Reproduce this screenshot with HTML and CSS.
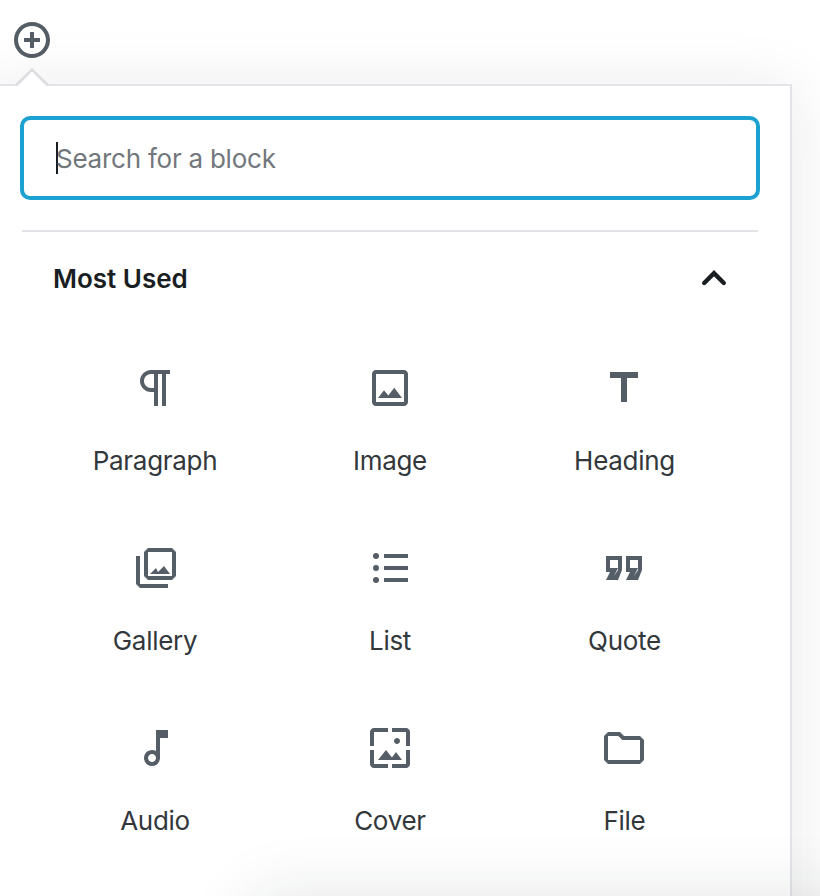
FILE: index.html
```html
<!DOCTYPE html>
<html lang="en">
<head>
<meta charset="utf-8">
<title>Block inserter</title>
<link rel="stylesheet" href="styles.css">
</head>
<body>
<div class="editor">
  <header class="toolbar">
    <svg class="add-icon" viewBox="0 0 20 20"><path d="M10 1c-5 0-9 4-9 9s4 9 9 9 9-4 9-9-4-9-9-9zm0 16c-3.900 0-7-3.100-7-7s3.100-7 7-7 7 3.100 7 7-3.100 7-7 7zm1-11H9v3H6v2h3v3h2v-3h3V9h-3V6z"/></svg>
  </header>
  <main class="popover">
    <svg class="arrow" viewBox="0 0 36 20"><path class="arrow-fill" d="M2 18L18 2l16 16v2H2z"/><path class="arrow-line" d="M2 17.500L18 1.800 34 17.500"/></svg>
    <div class="search"><span class="caret"></span><span class="placeholder">Search for a block</span></div>
    <section class="results">
      <h2 class="panel-title"><span>Most Used</span>
        <svg class="chevron" viewBox="0 0 24 24"><path d="M7.100 14L12 9.100l4.900 4.900"/></svg>
      </h2>
      <ul class="blocks">
        <li class="block"><svg class="icon" viewBox="0 0 24 24"><path d="M11 5v7H9.500C7.600 12 6 10.400 6 8.500S7.600 5 9.500 5H11m8-2H9.500C6.500 3 4 5.500 4 8.500S6.500 14 9.500 14H11v7h2V5h2v16h2V5h2V3z"/></svg><span class="label">Paragraph</span></li>
        <li class="block"><svg class="icon" viewBox="0 0 24 24"><path d="M19 5v14H5V5h14m0-2H5c-1.100 0-2 .9-2 2v14c0 1.100.9 2 2 2h14c1.100 0 2-.9 2-2V5c0-1.100-.9-2-2-2z"/><path d="M14.140 11.860l-3 3.870L9 13.140 6 17h12l-3.860-5.140z"/></svg><span class="label">Image</span></li>
        <li class="block"><svg class="icon" viewBox="0 0 24 24"><path d="M5 4v3h5.500v12h3V7H19V4z"/></svg><span class="label">Heading</span></li>
        <li class="block"><svg class="icon" viewBox="0 0 24 24"><path d="M20 4v12H8V4h12m0-2H8L6 4v12l2 2h12l2-2V4l-2-2z"/><path d="M12 12l1 2 3-3 3 4H9z"/><path d="M2 6v14l2 2h14v-2H4V6H2z"/></svg><span class="label">Gallery</span></li>
        <li class="block"><svg class="icon" viewBox="0 0 24 24"><path d="M9 19h12v-2H9v2zm0-6h12v-2H9v2zm0-8v2h12V5H9z"/><circle cx="5" cy="6" r="1.500"/><circle cx="5" cy="12" r="1.500"/><circle cx="5" cy="18" r="1.500"/></svg><span class="label">List</span></li>
        <li class="block"><svg class="icon" viewBox="0 0 24 24"><path d="M19 18h-6l2-4h-2V6h8v7l-2 5zm-2-2l2-3V8h-4v4h4l-2 4zm-8 2H3l2-4H3V6h8v7l-2 5zm-2-2l2-3V8H5v4h4l-2 4z"/></svg><span class="label">Quote</span></li>
        <li class="block"><svg class="icon" viewBox="0 0 24 24"><path d="M12 3l.01 10.550c-.59-.34-1.270-.55-2-.55C7.790 13 6 14.790 6 17s1.790 4 4.010 4S14 19.210 14 17V7h4V3h-6zm-1.990 16c-1.100 0-2-.9-2-2s.9-2 2-2 2 .9 2 2-.9 2-2 2z"/></svg><span class="label">Audio</span></li>
        <li class="block"><svg class="icon" viewBox="0 0 24 24"><path d="M4 4h7V2H4c-1.100 0-2 .9-2 2v7h2V4zm6 9l-4 5h12l-3-4-2.030 2.710L10 13zm7-4.500c0-.83-.67-1.500-1.500-1.500S14 7.670 14 8.500s.67 1.500 1.500 1.500S17 9.330 17 8.500zM20 2h-7v2h7v7h2V4c0-1.100-.9-2-2-2zm0 18h-7v2h7c1.100 0 2-.9 2-2v-7h-2v7zM4 13H2v7c0 1.100.9 2 2 2h7v-2H4v-7z"/></svg><span class="label">Cover</span></li>
        <li class="block"><svg class="icon" viewBox="0 0 24 24"><path d="M9.170 6l2 2H20v10H4V6h5.170M10 4H4L2 6v12l2 2h16l2-2V8l-2-2h-8l-2-2z"/></svg><span class="label">File</span></li>
      </ul>
    </section>
  </main>
</div>
</body>
</html>
```
FILE: styles.css
```css
* {
  box-sizing: border-box;
}

body {
  margin: 0;
  background: #fff;
  color: #32373c;
  font-family: Inter, "Liberation Sans", sans-serif;
  font-size: 26px;
  line-height: 32px;
}

.editor {
  position: relative;
  height: 896px;
  overflow: hidden;
}

/* Shadow cast by the preview flyout just below the fold */
.editor::after {
  content: "";
  position: absolute;
  top: 898px;
  left: 254px;
  width: 900px;
  height: 300px;
  box-shadow: 0 0 64px rgba(25, 30, 35, 0.12);
}

.toolbar {
  height: 84px;
  padding: 20px 12px 0;
}

.add-icon {
  display: block;
  width: 40px;
  height: 40px;
  fill: #555d66;
}

.popover {
  position: relative;
  width: 804px;
  height: 1000px;
  margin-left: -12px;
  padding: 30px 30px 0;
  border: 2px solid #e2e4e7;
  background: #fff;
  box-shadow: 0 6px 60px rgba(25, 30, 35, 0.1);
}

.arrow {
  position: absolute;
  top: -18px;
  left: 24px;
  width: 36px;
  height: 20px;
}

.arrow-fill {
  fill: #fff;
}

.arrow-line {
  fill: none;
  stroke: #dcdee1;
  stroke-width: 2.8;
}

.search {
  display: flex;
  align-items: center;
  height: 84px;
  padding-left: 32px;
  border: 4px solid #1ca2d1;
  border-radius: 10px;
}

.caret {
  width: 2px;
  height: 32px;
  margin-right: -2px;
  background: #191e23;
}

.placeholder {
  padding-top: 2px;
  color: #72777c;
  letter-spacing: -0.24px;
}

.results {
  margin: 30px 2px 0;
  border-top: 2px solid #e2e4e7;
}

.panel-title {
  display: flex;
  align-items: center;
  justify-content: space-between;
  height: 94px;
  margin: 0;
  padding: 0 20px 0 31px;
  color: #191e23;
  font-size: 26px;
  font-weight: 600;
}

.chevron {
  width: 48px;
  height: 48px;
  fill: none;
  stroke: #191e23;
  stroke-width: 2.200;
  stroke-linecap: round;
}

.blocks {
  display: grid;
  grid-template-columns: repeat(3, 234px);
  grid-auto-rows: 180px;
  margin: 0;
  padding: 0 17px;
  list-style: none;
}

.block {
  display: flex;
  flex-direction: column;
  align-items: center;
  padding-top: 38px;
}

.icon {
  width: 48px;
  height: 48px;
  fill: #555d66;
}

.label {
  margin-top: 33px;
  letter-spacing: -0.3px;
}

.block:nth-child(3n + 1) .label {
  margin-right: 2px;
}

.block:nth-child(3n) .label {
  margin-left: 1px;
}
```
